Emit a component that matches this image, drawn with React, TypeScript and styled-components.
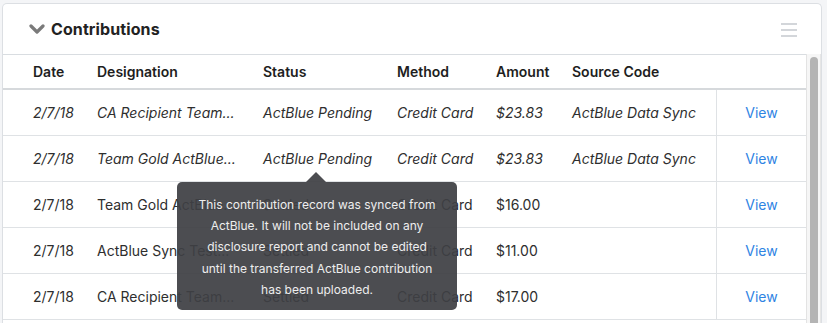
import React from "react";
import styled, { createGlobalStyle } from "styled-components";

const Global = createGlobalStyle`
  html, body { margin: 0; padding: 0; background: #f4f5f7; }
  body { font-family: Inter, "Noto Sans", sans-serif; color: #2b2b2b; overflow: hidden; }
  * { box-sizing: border-box; }
`;

const Page = styled.div`
  padding: 3px 5px 0 2px;
  height: 323px;
  overflow: hidden;
`;

const Card = styled.div`
  background: #fff;
  border: 1px solid #dcdfe3;
  border-bottom: none;
  border-radius: 5px 5px 0 0;
  height: 330px;
  display: flex;
  flex-direction: column;
`;

const Header = styled.div`
  height: 51px;
  display: flex;
  align-items: center;
  padding: 0 24px 0 26px;
  border-bottom: 1px solid #d9dde1;
  flex-shrink: 0;
`;

const Title = styled.h2`
  margin: 0 0 0 6px;
  font-size: 16px;
  font-weight: 700;
  color: #222;
  flex: 1;
  letter-spacing: 0.1px;
`;

const Menu = styled.div`
  display: flex;
  flex-direction: column;
  gap: 4px;
  margin-top: 2px;
  & > span { display: block; width: 16px; height: 2px; background: #d3d6da; }
`;

const Body = styled.div`
  display: flex;
  flex: 1;
  min-height: 0;
`;

const Table = styled.div`
  width: 803px;
  flex-shrink: 0;
  position: relative;
`;

const Row = styled.div<{ $head?: boolean; $italic?: boolean }>`
  display: grid;
  grid-template-columns: 94px 166px 134px 99px 76px 144px 90px;
  height: ${(p) => (p.$head ? "35px" : "46px")};
  border-bottom: ${(p) => (p.$head ? "2px solid #d6d9dc" : "1px solid #dfe2e5")};
  font-size: 14px;
  font-weight: ${(p) => (p.$head ? 600 : 400)};
  font-style: ${(p) => (p.$italic ? "italic" : "normal")};
  color: ${(p) => (p.$head ? "#1e1e1e" : "#2e2e2e")};
`;

const Cell = styled.div<{ $first?: boolean }>`
  display: flex;
  align-items: center;
  padding-left: ${(p) => (p.$first ? "30px" : "0")};
  white-space: nowrap;
  position: relative;
`;

const LinkCell = styled.div<{ $head?: boolean }>`
  display: flex;
  align-items: center;
  justify-content: center;
  border-left: ${(p) => (p.$head ? "none" : "1px solid #dfe2e5")};
  font-style: normal;
`;

const ViewLink = styled.a`
  color: #2f84e3;
  text-decoration: none;
  font-size: 14px;
`;

const Scrollbar = styled.div`
  width: 15px;
  margin-top: -1px;
  background: #f6f6f6;
  border-left: 1px solid #e3e3e3;
  border-right: 1px solid #e6e6e6;
  padding: 3px 2px 0 3px;
  position: relative;
  z-index: 1;
`;

const Thumb = styled.div`
  height: 400px;
  background: #b4b4b4;
  border-radius: 5px 5px 0 0;
`;

const Tooltip = styled.div`
  position: absolute;
  left: 174px;
  top: 127px;
  width: 280px;
  padding: 12px 8px 10px;
  background: rgba(62, 64, 68, 0.93);
  border-radius: 5px;
  color: #eeeeee;
  font-size: 12px;
  line-height: 21.2px;
  text-align: center;
  font-style: normal;
  font-weight: 400;
  white-space: nowrap;
  z-index: 5;
  &::before {
    content: "";
    position: absolute;
    top: -10px;
    left: 129px;
    border-left: 10px solid transparent;
    border-right: 10px solid transparent;
    border-bottom: 10px solid rgba(62, 64, 68, 0.93);
  }
`;

const Chevron = () => (
  <svg width="16" height="12" viewBox="0 0 16 12">
    <path d="M2 3 L8 9 L14 3" stroke="#7a7a7a" strokeWidth="3.2" fill="none" strokeLinecap="round" strokeLinejoin="round" />
  </svg>
);

type R = { date: string; des: string; status: string; method: string; amount: string; source: string; italic: boolean };

const rows: R[] = [
  { date: "2/7/18", des: "CA Recipient Team...", status: "ActBlue Pending", method: "Credit Card", amount: "$23.83", source: "ActBlue Data Sync", italic: true },
  { date: "2/7/18", des: "Team Gold ActBlue...", status: "ActBlue Pending", method: "Credit Card", amount: "$23.83", source: "ActBlue Data Sync", italic: true },
  { date: "2/7/18", des: "Team Gold ActBlue...", status: "Settled", method: "Credit Card", amount: "$16.00", source: "", italic: false },
  { date: "2/7/18", des: "ActBlue Sync Test...", status: "Settled", method: "Credit Card", amount: "$11.00", source: "", italic: false },
  { date: "2/7/18", des: "CA Recipient Team...", status: "Settled", method: "Credit Card", amount: "$17.00", source: "", italic: false },
];

export default function App() {
  return (
    <>
      <Global />
      <Page>
        <Card>
          <Header>
            <Chevron />
            <Title>Contributions</Title>
            <Menu>
              <span />
              <span />
              <span />
            </Menu>
          </Header>
          <Body>
            <Table>
              <Row $head>
                <Cell $first>Date</Cell>
                <Cell>Designation</Cell>
                <Cell>Status</Cell>
                <Cell>Method</Cell>
                <Cell>Amount</Cell>
                <Cell>Source Code</Cell>
                <LinkCell $head />
              </Row>
              {rows.map((r, i) => (
                <Row key={i} $italic={r.italic}>
                  <Cell $first>{r.date}</Cell>
                  <Cell>{r.des}</Cell>
                  <Cell>{r.status}</Cell>
                  <Cell>{r.method}</Cell>
                  <Cell>{r.amount}</Cell>
                  <Cell>{r.source}</Cell>
                  <LinkCell>
                    <ViewLink href="#">View</ViewLink>
                  </LinkCell>
                </Row>
              ))}
              <Tooltip>
                This contribution record was synced from
                <br />
                ActBlue. It will not be included on any
                <br />
                disclosure report and cannot be edited
                <br />
                until the transferred ActBlue contribution
                <br />
                has been uploaded.
              </Tooltip>
            </Table>
            <Scrollbar>
              <Thumb />
            </Scrollbar>
          </Body>
        </Card>
      </Page>
    </>
  );
}
